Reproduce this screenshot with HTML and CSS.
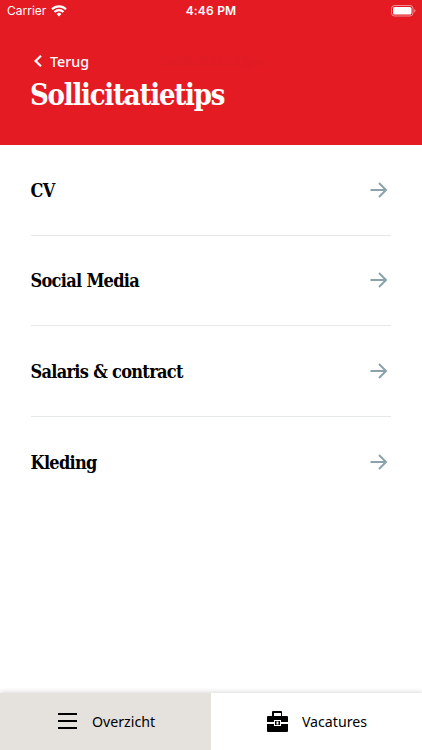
FILE: index.html
```html
<!DOCTYPE html>
<html lang="nl">
<head>
  <meta charset="UTF-8">
  <meta name="viewport" content="width=device-width, initial-scale=1.0">
  <title>Sollicitatietips</title>
  <link rel="stylesheet" href="styles.css">
</head>
<body>
  <header class="header">
    <div class="status">
      <div class="carrier">
        <span>Carrier</span>
        <svg width="16" height="12" viewBox="0 0 16 12" fill="none" stroke="#fff" stroke-width="2.1">
          <path d="M1 4.2a10 10 0 0 1 14 0"/>
          <path d="M3.5 7a6.4 6.4 0 0 1 9 0"/>
          <path d="M8 11.4L5.6 9a3.4 3.4 0 0 1 4.8 0z" fill="#fff" stroke="none"/>
        </svg>
      </div>
      <span class="time">4:46 PM</span>
      <svg class="battery" width="25" height="12" viewBox="0 0 25 12">
        <rect x="0.5" y="0.5" width="21.5" height="10.5" rx="3" fill="none" stroke="#fff" stroke-opacity="0.5"/>
        <rect x="2" y="2" width="18.5" height="7.5" rx="1.6" fill="#fff"/>
        <path d="M23.2 4v3.6q1.3-.5 1.3-1.8t-1.3-1.8z" fill="#fff" fill-opacity="0.5"/>
      </svg>
    </div>
    <div class="navbar">
      <a class="back">
        <svg width="8" height="12" viewBox="0 0 8 12" fill="none" stroke="#fff" stroke-width="2.2">
          <path d="M7 .8L1.6 6 7 11.2"/>
        </svg>
        <span>Terug</span>
      </a>
      <span class="navbar-title">Sollicitatietips</span>
    </div>
    <h1>Sollicitatietips</h1>
  </header>

  <ul class="list">
    <li>
      <span class="label">CV</span>
      <svg class="arrow" width="18" height="16" viewBox="0 0 18 16"><path d="M.5 8H16M9 1l7 7-7 7"/></svg>
    </li>
    <li>
      <span class="label">Social Media</span>
      <svg class="arrow" width="18" height="16" viewBox="0 0 18 16"><path d="M.5 8H16M9 1l7 7-7 7"/></svg>
    </li>
    <li>
      <span class="label">Salaris &amp; contract</span>
      <svg class="arrow" width="18" height="16" viewBox="0 0 18 16"><path d="M.5 8H16M9 1l7 7-7 7"/></svg>
    </li>
    <li>
      <span class="label">Kleding</span>
      <svg class="arrow" width="18" height="16" viewBox="0 0 18 16"><path d="M.5 8H16M9 1l7 7-7 7"/></svg>
    </li>
  </ul>

  <nav class="tabs">
    <a class="tab active">
      <svg width="19" height="18" viewBox="0 0 19 18" stroke="#000" stroke-width="2">
        <path d="M0 2h19M0 9h19M0 16h19"/>
      </svg>
      <span>Overzicht</span>
    </a>
    <a class="tab">
      <svg width="21" height="21" viewBox="0 0 21 21">
        <path fill-rule="evenodd" d="M5 5V1q0-1 1-1h8q1 0 1 1v4h5q1 0 1 1v5h-7V9H7v2H0V6q0-1 1-1zM7 5h7V2H7z"/>
        <path d="M0 13h7v2h7v-2h7v7q0 1-1 1H1q-1 0-1-1z"/>
        <path fill="#fff" d="M7 9h7v6H7z"/>
        <path fill-rule="evenodd" d="M8 10h5v4H8zM9.500 10.500v3h2v-3z"/>
      </svg>
      <span>Vacatures</span>
    </a>
  </nav>
</body>
</html>
```

FILE: styles.css
```css
* {
  box-sizing: border-box;
}
body {
  margin: 0;
  height: 100vh;
  display: flex;
  flex-direction: column;
  overflow: hidden;
  background-color: #fff;
  color: #000;
  font-family: "Noto Sans", "Open Sans", sans-serif;
}
svg {
  display: block;
  flex-shrink: 0;
}
.header {
  height: 145px;
  background-color: #e41b23;
  color: #fff;
}
.status {
  display: grid;
  grid-template-columns: 1fr auto 1fr;
  align-items: center;
  height: 22px;
  padding: 0 6px 0 7px;
  font-family: Inter, sans-serif;
  font-size: 12px;
  line-height: 22px;
}
.carrier {
  display: flex;
  align-items: center;
  gap: 5px;
}
.time {
  margin-right: 1px;
  font-weight: 600;
  letter-spacing: 0.2px;
}
.battery {
  justify-self: end;
}
.navbar {
  display: grid;
  grid-template-columns: 1fr auto 1fr;
  align-items: center;
  height: 30px;
  margin-top: 24px;
  padding: 0 31px 0 34px;
}
.back {
  display: flex;
  align-items: center;
  gap: 8px;
  font-size: 14.3px;
  font-weight: 500;
}
.navbar-title {
  margin-right: 3px;
  color: #df1b23;
  font-family: "DejaVu Serif Condensed", "DejaVu Serif", serif;
  font-stretch: condensed;
  font-size: 15px;
  font-weight: bold;
  letter-spacing: -0.5px;
}
h1 {
  margin: 0;
  padding: 1px 0 0 30px;
  font-family: "DejaVu Serif Condensed", "DejaVu Serif", serif;
  font-stretch: condensed;
  font-size: 29px;
  line-height: 36px;
  font-weight: bold;
  letter-spacing: -1.25px;
}
.list {
  flex: 1;
  margin: 0;
  padding: 0 31px 0 30.5px;
  list-style: none;
}
.list li {
  display: flex;
  align-items: center;
  justify-content: space-between;
  height: 90.6px;
  padding-right: 3.5px;
  border-bottom: 1px solid #e5e9e9;
}
.list li:last-child {
  border-bottom: none;
}
.label {
  padding-top: 2px;
  font-family: "DejaVu Serif Condensed", "DejaVu Serif", serif;
  font-stretch: condensed;
  font-size: 18px;
  line-height: 24px;
  font-weight: bold;
  letter-spacing: -0.7px;
}
.arrow {
  fill: none;
  stroke: #8aa3aa;
  stroke-width: 2;
}
.tabs {
  display: grid;
  grid-template-columns: 1fr 1fr;
  height: 57px;
  box-shadow: 0 -1px 5px rgba(0, 0, 0, 0.15);
}
.tab {
  display: flex;
  align-items: center;
  justify-content: center;
  gap: 14px;
  padding: 0 0 1px 1px;
  background-color: #fff;
  font-size: 14.2px;
}
.active {
  gap: 15px;
  padding-left: 2px;
  background-color: #e5e1dc;
}
```
